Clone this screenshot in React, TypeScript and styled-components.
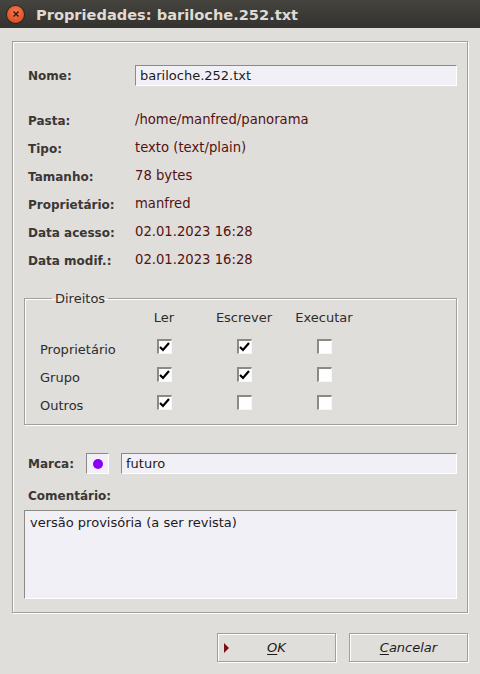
import styled, { createGlobalStyle } from 'styled-components'

const GlobalStyle = createGlobalStyle`
  html, body {
    margin: 0;
    padding: 0;
    background: #dfdedb;
  }
  * {
    box-sizing: border-box;
  }
`

const Window = styled.div`
  width: 480px;
  height: 674px;
  display: flex;
  flex-direction: column;
  background: #dfdedb;
  font-family: 'DejaVu Sans', 'Liberation Sans', sans-serif;
  font-size: 13px;
  color: #2e2c2a;
  overflow: hidden;
`

const TitleBar = styled.div`
  height: 28px;
  flex: none;
  display: flex;
  align-items: center;
  gap: 12px;
  padding-left: 7px;
  background: linear-gradient(#45443f, #3a3935 60%, #34332f);
`

const CloseButton = styled.div`
  width: 17px;
  height: 17px;
  border-radius: 50%;
  display: flex;
  align-items: center;
  justify-content: center;
  background: radial-gradient(circle at 50% 35%, #f47b52, #e5562a 60%, #c9431c);
  box-shadow: 0 0 0 1px rgba(0, 0, 0, 0.35);
`

const Title = styled.div`
  font-family: 'DejaVu Sans', sans-serif;
  font-weight: bold;
  font-size: 14.6px;
  color: #dfdbd2;
`

const Body = styled.div`
  flex: 1;
  display: flex;
  flex-direction: column;
  padding: 13px 12px 12px 12px;
`

const Panel = styled.div`
  flex: 1;
  display: flex;
  flex-direction: column;
  border: 1px solid #a09f9c;
  box-shadow: 1px 1px 0 #ffffff, inset 1px 1px 0 #ffffff;
  padding: 23px 10px 13px 11px;
`

const NameRow = styled.div`
  display: flex;
  align-items: center;
  padding-left: 4px;
`

const InfoGrid = styled.div`
  display: grid;
  grid-template-columns: 107px 1fr;
  grid-auto-rows: 28px;
  align-items: center;
  padding-left: 4px;
  margin-top: 21px;
`

const Label = styled.div<{ $width?: number }>`
  font-weight: bold;
  font-size: 12px;
  color: #3b3735;
  ${p => (p.$width ? `width: ${p.$width}px; flex: none;` : '')}
`

const Value = styled.div`
  color: #561010;
  font-size: 13.2px;
  padding-bottom: 4px;
`

const TextField = styled.div`
  height: 21px;
  background: #f2f0f7;
  border-top: 1px solid #8b8a87;
  border-left: 1px solid #8b8a87;
  border-right: 1px solid #ffffff;
  border-bottom: 1px solid #ffffff;
  padding: 0 4px;
  display: flex;
  align-items: center;
  color: #1c1b1a;
  flex: 1;
`

const Group = styled.fieldset`
  margin: 16px 0 0 0;
  padding: 0 0 6px 15px;
  border: 1px solid #a09f9c;
  box-shadow: 1px 1px 0 #ffffff, inset 1px 1px 0 #ffffff;
  display: grid;
  grid-template-columns: 84px repeat(3, 80px);
  grid-auto-rows: 28px;
  align-items: center;
`

const Legend = styled.legend`
  padding: 0 3px;
  margin-left: 12px;
  color: #2e2c2a;
`

const ColHead = styled.div`
  text-align: center;
  align-self: start;
  padding-top: 4px;
`

const RowName = styled.div`
  padding-top: 2px;
`

const Check = styled.div`
  justify-self: center;
  width: 15px;
  height: 15px;
  background: #ffffff;
  border-top: 2px solid #8b8a87;
  border-left: 2px solid #8b8a87;
  border-right: 1px solid #f6f6f6;
  border-bottom: 1px solid #f6f6f6;
  display: flex;
  align-items: center;
  justify-content: center;
  margin-bottom: 4px;
`

const TagRow = styled.div`
  display: flex;
  align-items: center;
  margin-top: 28px;
  padding-left: 4px;
`

const Swatch = styled.div`
  width: 23px;
  height: 21px;
  background: #f2f0f7;
  border-top: 1px solid #8b8a87;
  border-left: 1px solid #8b8a87;
  border-right: 1px solid #ffffff;
  border-bottom: 1px solid #ffffff;
  display: flex;
  align-items: center;
  justify-content: center;
  margin-right: 12px;
`

const Dot = styled.div<{ $color: string }>`
  width: 10px;
  height: 10px;
  border-radius: 50%;
  background: ${p => p.$color};
`

const CommentLabel = styled(Label)`
  margin: 15px 0 7px 4px;
`

const CommentBox = styled.div`
  flex: 1;
  background: #f2f0f7;
  border-top: 1px solid #8b8a87;
  border-left: 1px solid #8b8a87;
  border-right: 1px solid #ffffff;
  border-bottom: 1px solid #ffffff;
  padding: 4px 5px;
  color: #1c1b1a;
`

const ButtonRow = styled.div`
  display: flex;
  justify-content: flex-end;
  gap: 13px;
  margin-top: 20px;
`

const Button = styled.div`
  position: relative;
  width: 119px;
  height: 29px;
  border: 1px solid #a09f9c;
  box-shadow: 1px 1px 0 #ffffff, inset 1px 1px 0 #ffffff;
  display: flex;
  align-items: center;
  justify-content: center;
  font-style: italic;
  color: #1c1b1a;
  u {
    text-underline-offset: 2px;
  }
`

const DefaultMark = styled.span`
  position: absolute;
  left: 6px;
  top: 9px;
  width: 0;
  height: 0;
  border-top: 5px solid transparent;
  border-bottom: 5px solid transparent;
  border-left: 5px solid #7a1010;
`

const CheckMark = () => (
  <svg width="11" height="10" viewBox="0 0 11 10">
    <path d="M1 5 L4 8 L10 1" fill="none" stroke="#000" strokeWidth="2.2" />
  </svg>
)

const info: [string, string][] = [
  ['Pasta:', '/home/manfred/panorama'],
  ['Tipo:', 'texto (text/plain)'],
  ['Tamanho:', '78 bytes'],
  ['Proprietário:', 'manfred'],
  ['Data acesso:', '02.01.2023 16:28'],
  ['Data modif.:', '02.01.2023 16:28'],
]

const rights: [string, boolean[]][] = [
  ['Proprietário', [true, true, false]],
  ['Grupo', [true, true, false]],
  ['Outros', [true, false, false]],
]

export default function App() {
  return (
    <Window>
      <GlobalStyle />
      <TitleBar>
        <CloseButton>
          <svg width="8" height="8" viewBox="0 0 8 8">
            <path d="M1.5 1.5 L6.5 6.5 M6.5 1.5 L1.5 6.5" stroke="#3a1a10" strokeWidth="1.5" />
          </svg>
        </CloseButton>
        <Title>Propriedades: bariloche.252.txt</Title>
      </TitleBar>
      <Body>
        <Panel>
          <NameRow>
            <Label $width={107}>Nome:</Label>
            <TextField>bariloche.252.txt</TextField>
          </NameRow>

          <InfoGrid>
            {info.map(([k, v]) => [
              <Label key={k}>{k}</Label>,
              <Value key={k + 'v'}>{v}</Value>,
            ])}
          </InfoGrid>

          <Group>
            <Legend>Direitos</Legend>
            <div />
            <ColHead>Ler</ColHead>
            <ColHead>Escrever</ColHead>
            <ColHead>Executar</ColHead>
            {rights.map(([who, flags]) => [
              <RowName key={who}>{who}</RowName>,
              ...flags.map((on, i) => (
                <Check key={who + i}>{on && <CheckMark />}</Check>
              )),
            ])}
          </Group>

          <TagRow>
            <Label $width={58}>Marca:</Label>
            <Swatch>
              <Dot $color="#8c00f5" />
            </Swatch>
            <TextField>futuro</TextField>
          </TagRow>

          <CommentLabel>Comentário:</CommentLabel>
          <CommentBox>versão provisória (a ser revista)</CommentBox>
        </Panel>

        <ButtonRow>
          <Button>
            <DefaultMark />
            <span><u>O</u>K</span>
          </Button>
          <Button>
            <span><u>C</u>ancelar</span>
          </Button>
        </ButtonRow>
      </Body>
    </Window>
  )
}
